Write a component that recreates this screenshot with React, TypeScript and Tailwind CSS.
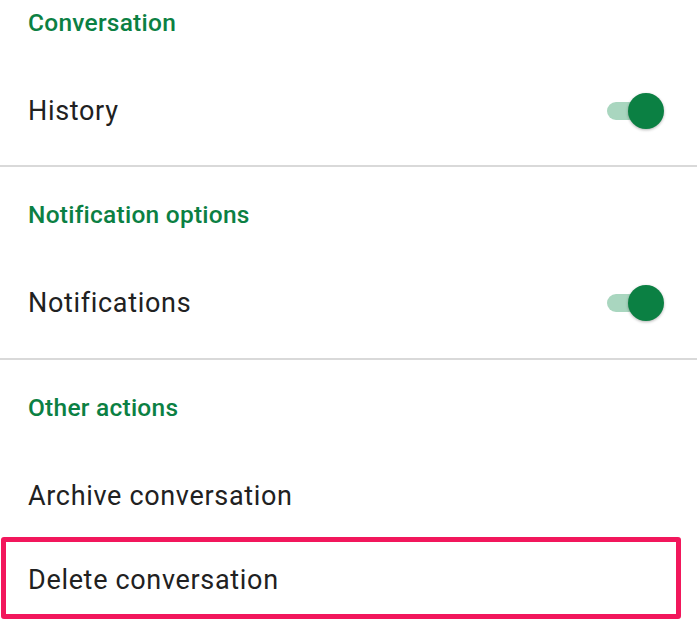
import React from "react";

function Toggle() {
  return (
    <div className="relative w-[57px] h-[36px] flex items-center">
      <div className="absolute left-0 top-[9px] w-[44px] h-[18px] rounded-full bg-[#a9d6bf]" />
      <div className="absolute right-0 top-0 w-[36px] h-[36px] rounded-full bg-[#0b8043] shadow-[0_1px_3px_rgba(0,0,0,0.3)]" />
    </div>
  );
}

function Header({ children }: { children: React.ReactNode }) {
  return (
    <div className="h-[96px] flex items-center pl-[28px] text-[24.5px] font-medium text-[#0b8043] tracking-[0.01em]">
      {children}
    </div>
  );
}

function Row({ children, toggle }: { children: React.ReactNode; toggle?: boolean }) {
  return (
    <div className="h-[80px] flex items-center justify-between pl-[28px] pr-[33px] text-[27px] text-[#212121] tracking-[0.025em]">
      <span>{children}</span>
      {toggle && <Toggle />}
    </div>
  );
}

function Divider() {
  return <div className="h-[2px] bg-[#d9d9d9]" />;
}

export default function App() {
  return (
    <div
      className="w-[697px] h-[621px] overflow-hidden bg-white"
      style={{ fontFamily: "Roboto, 'Noto Sans', sans-serif" }}
    >
      <div className="-mt-[25px]">
        <Header>Conversation</Header>
        <Row toggle>History</Row>
        <div className="h-[14px]" />
        <Divider />
      </div>
      <div>
        <Header>Notification options</Header>
        <Row toggle>Notifications</Row>
        <div className="h-[15px]" />
        <Divider />
      </div>
      <div>
        <Header>Other actions</Header>
        <Row>Archive conversation</Row>
        <div className="mt-[1px] ml-[1px] w-[680px] h-[82px] border-[5px] border-[#f2175c] rounded-[3px] pl-[22px] pt-[4px] flex items-center text-[27px] text-[#212121] tracking-[0.025em]">
          Delete conversation
        </div>
      </div>
    </div>
  );
}
